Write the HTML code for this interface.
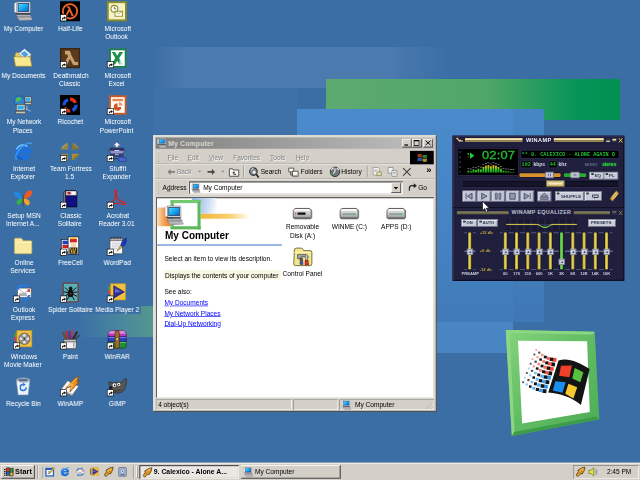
<!DOCTYPE html>
<html><head><meta charset="utf-8"><title>Desktop</title>
<style>
html,body{margin:0;padding:0;width:640px;height:480px;overflow:hidden;background:#3a6ea5}
body{font-family:"Liberation Sans",sans-serif;font-size:10.5px;color:#000;position:relative}
#wp{position:absolute;left:0;top:0;width:640px;height:480px}
#s{position:absolute;left:0;top:0;width:1024px;height:768px;transform:scale(.625);transform-origin:0 0;filter:blur(.55px)}
.a{position:absolute;white-space:nowrap}
svg{position:absolute;overflow:visible}
/* desktop icons */
.di{position:absolute;width:75px;height:75px}
.di svg{left:21px;top:0;width:32px;height:32px}
.di span{position:absolute;left:-10px;width:95px;top:37px;text-align:center;color:#fff;line-height:13px}
.di i{font-style:normal;background:#3a6ea5;padding:0 2px 1px}
/* taskbar */
#tb{position:absolute;left:0;top:740px;width:1024px;height:28px;background:#d4d0c8;box-shadow:inset 0 1px 0 #d4d0c8,inset 0 2px 0 #fff}
.btn{position:absolute;background:#d4d0c8;box-shadow:inset -1px -1px 0 #404040,inset 1px 1px 0 #fff,inset -2px -2px 0 #808080}
.sunk{position:absolute;box-shadow:inset 1px 1px 0 #808080,inset -1px -1px 0 #fff}
.grip{position:absolute;width:3px;box-shadow:inset 1px 1px 0 #fff,inset -1px -1px 0 #808080}
.etch{position:absolute;height:2px;border-top:1px solid #808080;border-bottom:1px solid #fff;box-sizing:border-box}
.vsep{position:absolute;width:2px;border-left:1px solid #808080;border-right:1px solid #fff;box-sizing:border-box}
/* window */
#win{position:absolute;left:245px;top:216px;width:454px;height:443px;background:#d4d0c8;box-shadow:inset -1px -1px 0 #404040,inset 1px 1px 0 #d4d0c8,inset -2px -2px 0 #808080,inset 2px 2px 0 #fff}
#ttl{position:absolute;left:4px;top:4px;width:446px;height:18px;background:linear-gradient(90deg,#808080,#c0c0c0)}
.dis{color:#808080;text-shadow:1px 1px 0 #fff}
.cb{position:absolute;top:2px;width:16px;height:14px;background:#d4d0c8;box-shadow:inset -1px -1px 0 #404040,inset 1px 1px 0 #fff,inset -2px -2px 0 #808080}
.lnk{color:#00f;text-decoration:underline}
.fl{position:absolute;width:90px;text-align:center;line-height:13px}
</style></head><body>
<svg width="0" height="0" style="position:absolute">
<defs>
<linearGradient id="scr" x1="0" y1="0" x2="1" y2="1"><stop offset="0" stop-color="#58e0ff"/><stop offset=".5" stop-color="#18a8f0"/><stop offset="1" stop-color="#0860c8"/></linearGradient>
<symbol id="mycomp" viewBox="0 0 32 32">
<path d="M2 3l4-2v18l-4-2z" fill="#f4f4f4" stroke="#9090a0" stroke-width=".6"/>
<path d="M6 1h20q1.500 0 1.500 1.500V18q0 1-1.500 1H6z" fill="#e2e2ea" stroke="#707080" stroke-width=".8"/>
<rect x="8" y="3.500" width="17" height="13" fill="url(#scr)" stroke="#283858" stroke-width="1.200"/>
<path d="M3 18.500l3 .5h21.500l-.5 2.500H7z" fill="#303030"/>
<path d="M5 21.500h22l3 3.500H7z" fill="#b8b8c0" stroke="#606068" stroke-width=".6"/>
<path d="M6 25.500l22-.5 3.500 5L11 31z" fill="#e4e4e8" stroke="#50505a" stroke-width=".8"/>
<path d="M9 27l19-.6M10.500 29l19-.6" stroke="#70707c" stroke-width=".9"/>
</symbol>
<linearGradient id="drg" x1="0" y1="0" x2="0" y2="1"><stop offset="0" stop-color="#f0f0f0"/><stop offset=".5" stop-color="#c8c8c8"/><stop offset="1" stop-color="#909090"/></linearGradient>
<symbol id="drv" viewBox="0 0 32 32"><path d="M4 8.500h23l4 3.500v11l-2 2H3l-2-2V12z" fill="url(#drg)" stroke="#383838" stroke-width="1.300"/><path d="M4.500 9.500h22l3 2.500H2z" fill="#fafafa"/><path d="M27 9l4 3v11l-2 2V12z" fill="#808080"/><path d="M2 23.500h27" stroke="#686868" stroke-width="1.500"/></symbol>
</defs></svg>
<svg id="wp" viewBox="0 0 640 480">
<defs>
<linearGradient id="gg" x1="0" x2="1"><stop offset="0" stop-color="#5daa70"/><stop offset=".55" stop-color="#50a668"/><stop offset=".85" stop-color="#089458"/><stop offset="1" stop-color="#009050"/></linearGradient>
<linearGradient id="gb" x1="0" y1="0" x2="0" y2="1"><stop offset="0" stop-color="#4b8bcb"/><stop offset=".5" stop-color="#4684c4"/><stop offset="1" stop-color="#417bb8"/></linearGradient>
<linearGradient id="gl" x1="0" x2="1"><stop offset="0" stop-color="#3a6ea5"/><stop offset=".12" stop-color="#4a7aae"/><stop offset=".8" stop-color="#4a7aae"/><stop offset="1" stop-color="#3a6ea5"/></linearGradient>
<linearGradient id="gn" x1="0" x2="1"><stop offset="0" stop-color="#3a6ea5"/><stop offset=".5" stop-color="#4684a0"/><stop offset="1" stop-color="#56988c"/></linearGradient>
</defs>
<rect width="640" height="480" fill="#3a6ea5"/>
<rect x="153" y="88" width="144" height="48" fill="#3d71a8"/><rect x="150" y="47" width="300" height="41" fill="url(#gl)"/>
<rect x="75" y="306" width="80" height="31" fill="url(#gn)"/>
<rect x="326" y="79" width="294" height="41" fill="url(#gg)"/>
<rect x="297" y="109" width="247" height="213" fill="url(#gb)"/>
<rect x="513" y="109" width="31" height="213" fill="#3a6ea5" opacity=".18"/><rect x="297" y="322" width="216" height="31" fill="#4985c3"/>
<!-- ME logo -->
<defs><linearGradient id="lg" x1="0" y1="0" x2="1" y2="1"><stop offset="0" stop-color="#84d47c"/><stop offset=".5" stop-color="#60bc62"/><stop offset="1" stop-color="#4cac54"/></linearGradient></defs>
<polygon points="505.8,329.9 594.7,331.8 599.3,419.3 511.8,436.1" fill="url(#lg)"/>
<polygon points="505.8,329.9 594.7,331.8 592,334.500 509.500,333" fill="#8cd880"/>
<polygon points="505.8,329.9 509.500,333 514.500,432 511.8,436.1" fill="#8cd880"/>
<polygon points="599.3,419.3 511.8,436.1 514.500,432 596,416.500" fill="#3c9c48"/>
<polygon points="518,340.7 587.1,341.3 589.8,412 522.1,423.4" fill="#fff"/>
<path d="M558.5,360.4 C567.5,357.3 578.4,361.6 589.6,369.0 L580.9,405.0 C572.2,397.2 559.7,393.1 548.2,392.4 Z" fill="#141414"/>
<polygon points="561.0,365.7 571.9,365.4 569.4,377.2 559.1,375.7" fill="#f0402a"/>
<polygon points="574.7,367.9 583.4,372.2 580.3,382.2 572.2,378.5" fill="#58c040"/>
<polygon points="555.3,381.3 565.6,382.2 562.5,392.8 552.8,390.6" fill="#1890f0"/>
<polygon points="568.4,383.8 577.2,387.2 573.4,398.4 565.3,393.8" fill="#f8c830"/>
<polygon points="552.8,357.8 556.7,358.3 556.2,362.0 552.3,361.5" fill="#f04830"/>
<polygon points="551.3,362.3 555.2,362.7 554.8,366.5 550.9,366.0" fill="#141414"/>
<polygon points="549.9,366.7 553.8,367.2 553.4,370.9 549.5,370.4" fill="#f04830"/>
<polygon points="548.5,371.2 552.4,371.6 551.9,375.4 548.0,374.9" fill="#141414"/>
<polygon points="547.1,375.6 551.0,376.1 550.5,379.8 546.6,379.3" fill="#2896f0"/>
<polygon points="545.6,380.1 549.5,380.6 549.1,384.3 545.2,383.8" fill="#141414"/>
<polygon points="544.2,384.5 548.1,385.0 547.6,388.8 543.8,388.2" fill="#2896f0"/>
<polygon points="542.8,389.0 546.7,389.5 546.2,393.2 542.3,392.7" fill="#141414"/>
<polygon points="549.9,357.4 553.4,357.8 553.0,361.3 549.4,360.8" fill="#141414"/>
<polygon points="548.4,361.9 551.9,362.3 551.5,365.7 547.9,365.2" fill="#f15842"/>
<polygon points="546.9,366.3 550.4,366.7 550.0,370.1 546.4,369.7" fill="#141414"/>
<polygon points="545.4,370.7 548.9,371.2 548.5,374.6 544.9,374.1" fill="#f15842"/>
<polygon points="543.9,375.2 547.4,375.6 547.0,379.0 543.4,378.6" fill="#141414"/>
<polygon points="542.4,379.6 545.9,380.0 545.5,383.5 541.9,383.0" fill="#3b9ff1"/>
<polygon points="540.9,384.1 544.4,384.5 544.0,387.9 540.4,387.4" fill="#141414"/>
<polygon points="539.4,388.5 542.9,388.9 542.5,392.3 538.9,391.9" fill="#3b9ff1"/>
<polygon points="547.0,356.7 550.2,357.1 549.8,360.2 546.6,359.8" fill="#f26955"/>
<polygon points="545.4,361.2 548.6,361.5 548.2,364.6 545.0,364.2" fill="#141414"/>
<polygon points="543.8,365.6 547.1,366.0 546.7,369.1 543.4,368.7" fill="#f26955"/>
<polygon points="542.3,370.0 545.5,370.4 545.1,373.5 541.9,373.1" fill="#141414"/>
<polygon points="540.7,374.5 543.9,374.9 543.5,377.9 540.3,377.5" fill="#4fa9f2"/>
<polygon points="539.1,378.9 542.3,379.3 541.9,382.4 538.7,382.0" fill="#141414"/>
<polygon points="537.5,383.3 540.8,383.7 540.4,386.8 537.1,386.4" fill="#4fa9f2"/>
<polygon points="536.0,387.8 539.2,388.2 538.8,391.3 535.6,390.8" fill="#141414"/>
<polygon points="544.1,355.5 547.0,355.9 546.6,358.6 543.7,358.3" fill="#141414"/>
<polygon points="542.4,360.0 545.3,360.3 545.0,363.1 542.1,362.7" fill="#f47a68"/>
<polygon points="540.8,364.4 543.7,364.8 543.3,367.5 540.4,367.2" fill="#141414"/>
<polygon points="539.1,368.9 542.0,369.2 541.7,372.0 538.8,371.6" fill="#f47a68"/>
<polygon points="537.5,373.3 540.4,373.7 540.0,376.4 537.1,376.1" fill="#141414"/>
<polygon points="535.8,377.8 538.7,378.1 538.4,380.9 535.5,380.5" fill="#63b2f4"/>
<polygon points="534.2,382.2 537.1,382.6 536.7,385.4 533.8,385.0" fill="#141414"/>
<polygon points="532.5,386.7 535.4,387.0 535.1,389.8 532.2,389.4" fill="#63b2f4"/>
<polygon points="541.2,353.7 543.7,354.0 543.4,356.5 540.9,356.1" fill="#f58b7b"/>
<polygon points="539.5,358.2 542.0,358.5 541.7,361.0 539.2,360.6" fill="#141414"/>
<polygon points="537.7,362.7 540.3,363.0 540.0,365.5 537.4,365.1" fill="#f58b7b"/>
<polygon points="536.0,367.2 538.6,367.5 538.3,370.0 535.7,369.6" fill="#141414"/>
<polygon points="534.3,371.7 536.8,372.0 536.5,374.5 534.0,374.1" fill="#76bcf5"/>
<polygon points="532.6,376.2 535.1,376.5 534.8,379.0 532.3,378.6" fill="#141414"/>
<polygon points="530.8,380.7 533.4,381.0 533.1,383.5 530.5,383.1" fill="#76bcf5"/>
<polygon points="529.1,385.2 531.7,385.5 531.4,388.0 528.8,387.6" fill="#141414"/>
<polygon points="538.3,351.4 540.5,351.7 540.2,353.8 538.0,353.5" fill="#505050"/>
<polygon points="536.5,356.0 538.7,356.3 538.4,358.4 536.2,358.1" fill="#f69b8e"/>
<polygon points="534.7,360.6 536.9,360.8 536.6,362.9 534.4,362.7" fill="#505050"/>
<polygon points="532.9,365.1 535.1,365.4 534.8,367.5 532.6,367.2" fill="#f69b8e"/>
<polygon points="531.1,369.7 533.3,369.9 533.0,372.1 530.8,371.8" fill="#505050"/>
<polygon points="529.3,374.2 531.5,374.5 531.2,376.6 529.0,376.3" fill="#8ac6f6"/>
<polygon points="527.5,378.8 529.7,379.1 529.4,381.2 527.2,380.9" fill="#505050"/>
<polygon points="525.7,383.3 527.9,383.6 527.7,385.7 525.4,385.4" fill="#8ac6f6"/>
<polygon points="535.4,348.8 537.3,349.1 537.0,350.9 535.2,350.6" fill="#f8aca1"/>
<polygon points="533.5,353.5 535.4,353.7 535.2,355.5 533.3,355.3" fill="#505050"/>
<polygon points="531.6,358.1 533.5,358.3 533.3,360.1 531.4,359.9" fill="#f8aca1"/>
<polygon points="529.8,362.7 531.6,363.0 531.4,364.8 529.5,364.5" fill="#505050"/>
<polygon points="527.9,367.4 529.8,367.6 529.5,369.4 527.7,369.2" fill="#9ecff8"/>
<polygon points="526.0,372.0 527.9,372.2 527.7,374.0 525.8,373.8" fill="#505050"/>
<polygon points="524.2,376.6 526.0,376.9 525.8,378.7 523.9,378.4" fill="#9ecff8"/>
<polygon points="522.3,381.3 524.2,381.5 523.9,383.3 522.1,383.1" fill="#505050"/>
</svg>
<div id="s">
<!-- desktop icons -->
<div class="di" style="left:0px;top:2px"><svg viewBox="0 0 32 32"><use href="#mycomp"/></svg><span><i>My Computer</i></span></div>
<div class="di" style="left:75px;top:2px"><svg viewBox="0 0 32 32"><rect width="32" height="32" fill="#000"/><circle cx="16" cy="16" r="11.500" fill="none" stroke="#f0622a" stroke-width="3"/><path d="M11 8h4l7 15.500h-3.500l-3.200-7.500-4 7.500H8l5.700-11-1-2.500H11z" fill="#f0622a"/><g transform="translate(0,21)"><rect x=".5" y=".5" width="10" height="10" fill="#fff" stroke="#000" stroke-width="1"/><path d="M3 8.500c0-3 2-4 4-4V3l2.500 2.500L7 8V6.500c-1.500 0-2.500.5-3 2z" fill="#000"/></g></svg><span><i>Half-Life</i></span></div>
<div class="di" style="left:150px;top:2px"><svg viewBox="0 0 32 32"><rect x="1.500" y="1.500" width="29" height="29" fill="#f4f0c8" stroke="#8c8c24" stroke-width="3"/><circle cx="12" cy="12" r="5.500" fill="#fff" stroke="#909028" stroke-width="1.800"/><path d="M12 8.500V12h3" stroke="#606018" stroke-width="1.300" fill="none"/><rect x="13" y="16" width="12" height="8" fill="#fffff0" stroke="#909028" stroke-width="1.500"/><path d="M13 16l6 4 6-4" stroke="#909028" stroke-width="1" fill="none"/></svg><span><i>Microsoft<br>Outlook</i></span></div>
<div class="di" style="left:0px;top:77px"><svg viewBox="0 0 32 32"><path d="M3 10l2-3h8l2 3h13v18H3z" fill="#e8c860" stroke="#907830" stroke-width="1"/><path d="M9 9l9-8 11 9-9 8z" fill="#fff" stroke="#7090c0" stroke-width="1"/><path d="M12 9l6-5 7 6-6 5z" fill="#50a0e0"/><path d="M1 14h26l3 15H4z" fill="#f8e890" stroke="#a08830" stroke-width="1"/></svg><span><i>My Documents</i></span></div>
<div class="di" style="left:75px;top:77px"><svg viewBox="0 0 32 32"><rect width="32" height="32" fill="#5a3a1c"/><rect x="1" y="1" width="30" height="30" fill="none" stroke="#3a2410" stroke-width="2"/><path d="M8 5h7l9 17h5v5h-8l-5-10-5 10H5v-5h3l5-9-1.500-3H8z" fill="#c8a070"/><path d="M8 5h7l2 4" stroke="#f0d0a0" stroke-width="1" fill="none"/><g transform="translate(0,21)"><rect x=".5" y=".5" width="10" height="10" fill="#fff" stroke="#000" stroke-width="1"/><path d="M3 8.500c0-3 2-4 4-4V3l2.500 2.500L7 8V6.500c-1.500 0-2.500.5-3 2z" fill="#000"/></g></svg><span><i>Deathmatch<br>Classic</i></span></div>
<div class="di" style="left:150px;top:77px"><svg viewBox="0 0 32 32"><rect x="5" y="2" width="25" height="28" fill="#fff" stroke="#208048" stroke-width="3"/><path d="M8 6h5l3.500 6L20 6h6l-6.500 10L26 26h-6l-3.500-6L13 26H7l6.500-10z" fill="#189048"/><path d="M20 20h8v8h-8z" fill="#fff" opacity=".7"/><g transform="translate(0,21)"><rect x=".5" y=".5" width="10" height="10" fill="#fff" stroke="#000" stroke-width="1"/><path d="M3 8.500c0-3 2-4 4-4V3l2.500 2.500L7 8V6.500c-1.500 0-2.500.5-3 2z" fill="#000"/></g></svg><span><i>Microsoft<br>Excel</i></span></div>
<div class="di" style="left:0px;top:152px"><svg viewBox="0 0 32 32"><circle cx="10" cy="10" r="8.500" fill="#3080d0" stroke="#205090" stroke-width="1"/><path d="M4 6q4-4 8-2 2 3-1 5-3 0-4 3-3-1-3-6zM10 14q4-1 6 2-2 3-5 2z" fill="#50c050"/><rect x="19" y="3" width="10" height="8" fill="#d8d4c8" stroke="#404040" stroke-width="1"/><rect x="20.500" y="4.500" width="7" height="5" fill="#30b0f0"/><rect x="19" y="12" width="10" height="3" fill="#c8c4b8" stroke="#404040" stroke-width=".8"/><rect x="5" y="15" width="14" height="10" fill="#d8d4c8" stroke="#404040" stroke-width="1"/><rect x="7" y="17" width="10" height="6" fill="#30b0f0"/><rect x="4" y="26" width="16" height="4" fill="#c8c4b8" stroke="#404040" stroke-width=".8"/><path d="M22 17v6M20 22l8 4" stroke="#a0c0e0" stroke-width="1.500"/></svg><span><i>My Network<br>Places</i></span></div>
<div class="di" style="left:75px;top:152px"><svg viewBox="0 0 32 32"><rect width="32" height="32" fill="#000"/><path d="M16 4a12 12 0 0 1 11 8l-5 1a7 7 0 0 0-6-4z" fill="#e83020"/><path d="M28 15a12 12 0 0 1-7 12l-2-5a7 7 0 0 0 4-6z" fill="#2050e0"/><path d="M17 28a12 12 0 0 1-12-7l5-2a7 7 0 0 0 6 4z" fill="#e83020"/><path d="M4 17a12 12 0 0 1 8-12l2 5a7 7 0 0 0-5 6z" fill="#2050e0"/><g transform="translate(0,21)"><rect x=".5" y=".5" width="10" height="10" fill="#fff" stroke="#000" stroke-width="1"/><path d="M3 8.500c0-3 2-4 4-4V3l2.500 2.500L7 8V6.500c-1.500 0-2.500.5-3 2z" fill="#000"/></g></svg><span><i>Ricochet</i></span></div>
<div class="di" style="left:150px;top:152px"><svg viewBox="0 0 32 32"><rect x="5" y="2" width="25" height="28" fill="#fff" stroke="#d05820" stroke-width="3"/><rect x="9" y="6" width="17" height="4" fill="#e88850"/><path d="M17 13a6 6 0 1 0 6 6h-6z" fill="#d05820"/><path d="M19 11v6h6a6 6 0 0 0-6-6z" fill="#f0a070"/><g transform="translate(0,21)"><rect x=".5" y=".5" width="10" height="10" fill="#fff" stroke="#000" stroke-width="1"/><path d="M3 8.500c0-3 2-4 4-4V3l2.500 2.500L7 8V6.500c-1.500 0-2.500.5-3 2z" fill="#000"/></g></svg><span><i>Microsoft<br>PowerPoint</i></span></div>
<div class="di" style="left:0px;top:227px"><svg viewBox="0 0 32 32"><path d="M16 3.500a13 13 0 0 1 13 14.500H11.500a5 5 0 0 0 9.500 1.500H28.500A13 13 0 1 1 16 3.500zm0 6a5 5 0 0 0-4.600 3.500h9.200A5 5 0 0 0 16 9.500z" fill="#1c70e0"/><path d="M5.500 12a11.500 11.500 0 0 1 10.500-7 12 12 0 0 1 7 2.500" stroke="#78c8ff" stroke-width="2.200" fill="none"/><path d="M30 3c-5-3.500-17 3-23 13.500-3 5.500-4 10.500-1 12" stroke="#3c98f4" stroke-width="2.400" fill="none"/><path d="M6 22a11 11 0 0 0 9 6" stroke="#0c48a8" stroke-width="1.500" fill="none"/></svg><span><i>Internet<br>Explorer</i></span></div>
<div class="di" style="left:75px;top:227px"><svg viewBox="0 0 32 32"><path d="M2 12V9l8-7h3v10z" fill="#94844c"/><path d="M3 9l8-6" stroke="#c8b878" stroke-width="1.200"/><path d="M19 2h3l8 7v3H19z" fill="#84743c"/><path d="M22 3l7 6" stroke="#b8a868" stroke-width="1.200"/><path d="M19 19h11v3l-8 7h-3z" fill="#a89034"/><path d="M20 28l9-7" stroke="#5c4c18" stroke-width="1"/><path d="M13 19v10h-3l-8-7v-3z" fill="#94844c"/><g transform="translate(0,21)"><rect x=".5" y=".5" width="10" height="10" fill="#fff" stroke="#000" stroke-width="1"/><path d="M3 8.500c0-3 2-4 4-4V3l2.500 2.500L7 8V6.500c-1.500 0-2.500.5-3 2z" fill="#000"/></g></svg><span><i>Team Fortress<br>1.5</i></span></div>
<div class="di" style="left:150px;top:227px"><svg viewBox="0 0 32 32"><path d="M16 0l6 6h-4v3h-4V6h-4z" fill="#f0f0fc" stroke="#505088" stroke-width=".8"/><path d="M5 10h22v3H5z" fill="#383868" stroke="#202040" stroke-width=".8"/><path d="M3 14h26l-4 5H7z" fill="#9898d0" stroke="#303060" stroke-width="1"/><path d="M6 20h20v3H6z" fill="#484880" stroke="#202040" stroke-width=".8"/><path d="M12 13h8v1.500h-8zM13 19h6v1.500h-6z" fill="#c8c8f0"/><path d="M19 24h4l1 1.500h7V31H19z" fill="#4868d0" stroke="#182878" stroke-width=".8"/><path d="M11 27h6" stroke="#303060" stroke-width="1.800"/><g transform="translate(0,21)"><rect x=".5" y=".5" width="10" height="10" fill="#fff" stroke="#000" stroke-width="1"/><path d="M3 8.500c0-3 2-4 4-4V3l2.500 2.500L7 8V6.500c-1.500 0-2.500.5-3 2z" fill="#000"/></g></svg><span><i>StuffIt<br>Expander</i></span></div>
<div class="di" style="left:0px;top:302px"><svg viewBox="0 0 32 32"><path d="M15 16C10 4 4 3 2 5c-2 3 2 12 13 11z" fill="#2088e0"/><path d="M15 16C8 15 4 20 6 24c3 4 9 0 9-8z" fill="#38b048"/><path d="M17 16C19 3 27 1 30 4c2 4-3 12-13 12z" fill="#f05820"/><path d="M17 16c8-1 11 5 9 9-3 4-9 0-9-9z" fill="#f8a020"/><path d="M16 10v17" stroke="#604020" stroke-width="1.500"/></svg><span><i>Setup MSN<br>Internet A...</i></span></div>
<div class="di" style="left:75px;top:302px"><svg viewBox="0 0 32 32"><path d="M9 3h16l2 2v24H9z" fill="#101088" stroke="#000" stroke-width="1"/><path d="M9 3h16l2 2v6H9z" fill="#d8d8e8" stroke="#000" stroke-width="1"/><path d="M12 5h5v4h-5z" fill="#c02020"/><path d="M6 6l3-3v26l-3-2z" fill="#808098" stroke="#000" stroke-width=".8"/><path d="M19 5h5v4h-5z" fill="#fff"/><g transform="translate(0,21)"><rect x=".5" y=".5" width="10" height="10" fill="#fff" stroke="#000" stroke-width="1"/><path d="M3 8.500c0-3 2-4 4-4V3l2.500 2.500L7 8V6.500c-1.500 0-2.500.5-3 2z" fill="#000"/></g></svg><span><i>Classic<br>Solitaire</i></span></div>
<div class="di" style="left:150px;top:302px"><svg viewBox="0 0 32 32"><path d="M13 2c3 0 3 5 2 10 2 5 6 8 11 9 4 1 5 3 3 4s-6-1-10-2c-5 0-10 2-14 4-2 1-4 0-3-2 2-3 7-5 11-8 1-4 1-8 0-11-1-3-1-4 0-4z" fill="none" stroke="#d82020" stroke-width="1.900"/><g transform="translate(0,21)"><rect x=".5" y=".5" width="10" height="10" fill="#fff" stroke="#000" stroke-width="1"/><path d="M3 8.500c0-3 2-4 4-4V3l2.500 2.500L7 8V6.500c-1.500 0-2.500.5-3 2z" fill="#000"/></g></svg><span><i>Acrobat<br>Reader 3.01</i></span></div>
<div class="di" style="left:0px;top:377px"><svg viewBox="0 0 32 32"><path d="M2 6q0-2 2-2h8q2 0 3 2l1 2h12q2 0 2 2v17q0 2-2 2H4q-2 0-2-2z" fill="#f8e8a0" stroke="#c0a858" stroke-width="1"/><path d="M3 11h26" stroke="#fff8c8" stroke-width="1.500"/></svg><span><i>Online<br>Services</i></span></div>
<div class="di" style="left:75px;top:377px"><svg viewBox="0 0 32 32"><rect x="2" y="6" width="13" height="20" fill="#fff" stroke="#000" stroke-width="1"/><rect x="4" y="8" width="9" height="6" fill="#2040c0"/><rect x="4" y="15" width="9" height="5" fill="#d02020"/><rect x="13" y="2" width="17" height="28" fill="#fff" stroke="#000" stroke-width="1"/><path d="M16 5h11v6H16z" fill="#d02020"/><path d="M17 11h9v8h-9z" fill="#f8d8b0"/><path d="M15 19h13v10H15z" fill="#202020"/><path d="M17 20l2 8M21 20v8M25 20l-2 8" stroke="#f0c020" stroke-width="1.500"/><path d="M16 3h11l-1 3-2-2-2.500 2-2.500-2-2 2z" fill="#f0c020"/><g transform="translate(0,21)"><rect x=".5" y=".5" width="10" height="10" fill="#fff" stroke="#000" stroke-width="1"/><path d="M3 8.500c0-3 2-4 4-4V3l2.500 2.500L7 8V6.500c-1.500 0-2.500.5-3 2z" fill="#000"/></g></svg><span><i>FreeCell</i></span></div>
<div class="di" style="left:150px;top:377px"><svg viewBox="0 0 32 32"><path d="M5 4h20v25H5z" fill="#f8f8f8" stroke="#404040" stroke-width="1"/><path d="M5 4h20v4H5z" fill="#c8c8c8" stroke="#404040" stroke-width="1"/><path d="M7 2v4M10 2v4M13 2v4M16 2v4M19 2v4M22 2v4" stroke="#303030" stroke-width="1.200"/><path d="M8 12h14M8 15h14M8 18h14M8 21h10" stroke="#b0b0c0" stroke-width="1"/><path d="M31 4c-4 1-8 6-9 12l3 2c5-3 7-9 6-14z" fill="#1838c0" stroke="#081868" stroke-width=".8"/><path d="M22 16l-6 9 9-7z" fill="#e0c040" stroke="#605010" stroke-width=".8"/><g transform="translate(0,21)"><rect x=".5" y=".5" width="10" height="10" fill="#fff" stroke="#000" stroke-width="1"/><path d="M3 8.500c0-3 2-4 4-4V3l2.500 2.500L7 8V6.500c-1.500 0-2.500.5-3 2z" fill="#000"/></g></svg><span><i>WordPad</i></span></div>
<div class="di" style="left:0px;top:452px"><svg viewBox="0 0 32 32"><path d="M7 9h22v15H7z" fill="#fff" stroke="#505050" stroke-width="1"/><path d="M7 9l11 8 11-8" stroke="#808080" stroke-width="1" fill="none"/><rect x="23" y="11" width="4" height="4" fill="#d04040"/><path d="M10 17h12v5H10z" fill="#b0b0b0"/><path d="M4 12C6 4 14 1 21 5l-2-4 7 4-7 4 1-2c-5-2-10 0-12 5z" fill="#2878e0"/><path d="M28 20c-2 8-10 11-17 7l2 4-7-4 7-4-1 2c5 2 10 0 12-5z" fill="#2878e0"/><g transform="translate(0,21)"><rect x=".5" y=".5" width="10" height="10" fill="#fff" stroke="#000" stroke-width="1"/><path d="M3 8.500c0-3 2-4 4-4V3l2.500 2.500L7 8V6.500c-1.500 0-2.500.5-3 2z" fill="#000"/></g></svg><span><i>Outlook<br>Express</i></span></div>
<div class="di" style="left:75px;top:452px"><svg viewBox="0 0 32 32"><rect x="5" y="1" width="24" height="30" rx="2" fill="#58b0b8" stroke="#704038" stroke-width="2.200"/><ellipse cx="17" cy="17.500" rx="4.500" ry="6" fill="#101010"/><circle cx="17" cy="9.500" r="3" fill="#101010"/><path d="M14 14L8 8M13 16l-7-1M13 19l-6 3M15 21l-4 7M20 14l6-6M21 16l7-1M21 19l6 3M19 21l4 7" stroke="#101010" stroke-width="1.600"/><circle cx="17" cy="18" r="1.500" fill="#a03030"/><g transform="translate(0,21)"><rect x=".5" y=".5" width="10" height="10" fill="#fff" stroke="#000" stroke-width="1"/><path d="M3 8.500c0-3 2-4 4-4V3l2.500 2.500L7 8V6.500c-1.500 0-2.500.5-3 2z" fill="#000"/></g></svg><span><i>Spider Solitaire</i></span></div>
<div class="di" style="left:150px;top:452px"><svg viewBox="0 0 32 32"><rect x="2" y="6" width="5" height="18" fill="#e04030"/><rect x="2" y="6" width="5" height="6" fill="#40a040"/><rect x="2" y="18" width="5" height="6" fill="#3060d0"/><rect x="6" y="2" width="24" height="26" fill="#f0c040" stroke="#c09020" stroke-width="1"/><path d="M11 5l17 10-17 10z" fill="#303098" stroke="#181860" stroke-width="1"/><path d="M13 9l10 6-10 1z" fill="#6868c8"/><g transform="translate(0,21)"><rect x=".5" y=".5" width="10" height="10" fill="#fff" stroke="#000" stroke-width="1"/><path d="M3 8.500c0-3 2-4 4-4V3l2.500 2.500L7 8V6.500c-1.500 0-2.500.5-3 2z" fill="#000"/></g></svg><span><i>Media Player 2</i></span></div>
<div class="di" style="left:0px;top:527px"><svg viewBox="0 0 32 32"><rect x="2" y="6" width="5" height="18" fill="#e04030"/><rect x="2" y="6" width="5" height="6" fill="#40a040"/><rect x="2" y="18" width="5" height="6" fill="#3060d0"/><rect x="6" y="2" width="24" height="26" fill="#f0c040" stroke="#c09020" stroke-width="1"/><circle cx="18" cy="15" r="9" fill="#909090" stroke="#404040" stroke-width="1"/><circle cx="18" cy="9.500" r="2.500" fill="#e0e0e0"/><circle cx="18" cy="20.500" r="2.500" fill="#e0e0e0"/><circle cx="12.500" cy="15" r="2.500" fill="#e0e0e0"/><circle cx="23.500" cy="15" r="2.500" fill="#e0e0e0"/><circle cx="18" cy="15" r="1.500" fill="#303030"/><g transform="translate(0,21)"><rect x=".5" y=".5" width="10" height="10" fill="#fff" stroke="#000" stroke-width="1"/><path d="M3 8.500c0-3 2-4 4-4V3l2.500 2.500L7 8V6.500c-1.500 0-2.500.5-3 2z" fill="#000"/></g></svg><span><i>Windows<br>Movie Maker</i></span></div>
<div class="di" style="left:75px;top:527px"><svg viewBox="0 0 32 32"><path d="M8 1l3 1 5 14h-4z" fill="#c02828"/><path d="M18 0h3l-1 16h-4z" fill="#d03030"/><path d="M13 3l3-1 3 14h-4z" fill="#2840c0"/><path d="M26 3l3 1-7 13h-4z" fill="#282828"/><path d="M31 8l1 2-9 8h-3z" fill="#404040"/><path d="M3 5l3-1 7 13H9z" fill="#704828"/><path d="M6 16h20v12q0 3-3 3H9q-3 0-3-3z" fill="#f4f4f4" stroke="#383838" stroke-width="1.200"/><path d="M6 16h20v4H6z" fill="#c0c0c4" stroke="#383838" stroke-width="1"/><path d="M22 21v8" stroke="#a8a8b0" stroke-width="2.500"/><g transform="translate(0,21)"><rect x=".5" y=".5" width="10" height="10" fill="#fff" stroke="#000" stroke-width="1"/><path d="M3 8.500c0-3 2-4 4-4V3l2.500 2.500L7 8V6.500c-1.500 0-2.500.5-3 2z" fill="#000"/></g></svg><span><i>Paint</i></span></div>
<div class="di" style="left:150px;top:527px"><svg viewBox="0 0 32 32"><path d="M2 7l4-5h21l4 5v5H2z" fill="#b838b8" stroke="#401040" stroke-width="1"/><path d="M6 2h21l4 5H2z" fill="#e088e0"/><path d="M2 12h29v8H2z" fill="#2c40c0" stroke="#101850" stroke-width="1"/><path d="M2 13h29" stroke="#7080e8" stroke-width="1.500"/><path d="M2 20h29v8l-2 2H4l-2-2z" fill="#209038" stroke="#083810" stroke-width="1"/><path d="M2 21h29" stroke="#60c070" stroke-width="1.500"/><path d="M14 2h5l1 5v23h-7V7z" fill="#9c6c30" stroke="#402408" stroke-width="1"/><rect x="14.500" y="13" width="4" height="5" fill="#e8d060" stroke="#503010" stroke-width=".8"/><g transform="translate(0,21)"><rect x=".5" y=".5" width="10" height="10" fill="#fff" stroke="#000" stroke-width="1"/><path d="M3 8.500c0-3 2-4 4-4V3l2.500 2.500L7 8V6.500c-1.500 0-2.500.5-3 2z" fill="#000"/></g></svg><span><i>WinRAR</i></span></div>
<div class="di" style="left:0px;top:602px"><svg viewBox="0 0 32 32"><path d="M5 6h22l-3 24H8z" fill="#e8f0f8" stroke="#8090a8" stroke-width="1"/><ellipse cx="16" cy="6" rx="11" ry="3.500" fill="#b0c0d0" stroke="#8090a8" stroke-width="1"/><ellipse cx="16" cy="6" rx="8" ry="2" fill="#607088"/><path d="M16 12a6 6 0 1 0 6 6h-2.500a3.500 3.500 0 1 1-3.500-3.500z" fill="#2878d8"/><path d="M16 10l4 3.500-4 3z" fill="#2878d8"/><path d="M8 8l2 20" stroke="#fff" stroke-width="2"/></svg><span><i>Recycle Bin</i></span></div>
<div class="di" style="left:75px;top:602px"><svg viewBox="0 0 32 32"><path d="M12 7l18 9-11 15L1 22z" fill="#f4f4f4" stroke="#606060" stroke-width="1"/><path d="M4 22l15 7" stroke="#a0a0a0" stroke-width="1.500"/><path d="M30 0l-3 9 4-1-15 17 2-9-9 4L23 4z" fill="#f08c18" stroke="#8c4c08" stroke-width="1.200"/><path d="M27 3L13 16l7-3-2 8" stroke="#f8c868" stroke-width="1.600" fill="none"/><g transform="translate(0,21)"><rect x=".5" y=".5" width="10" height="10" fill="#fff" stroke="#000" stroke-width="1"/><path d="M3 8.500c0-3 2-4 4-4V3l2.500 2.500L7 8V6.500c-1.500 0-2.500.5-3 2z" fill="#000"/></g></svg><span><i>WinAMP</i></span></div>
<div class="di" style="left:150px;top:602px"><svg viewBox="0 0 32 32"><path d="M31 4c-3 0-6 3-9 7-4-2-9-2-12 0L5 9c-2 0-3 2-2 4l3 3c-1 5 3 10 10 11 8 0 12-4 13-9 2-4 3-10 2-14z" fill="#585450" stroke="#282420" stroke-width="1"/><circle cx="12" cy="14" r="3" fill="#fff"/><circle cx="12.500" cy="14.500" r="1.300" fill="#000"/><circle cx="19" cy="13" r="2.500" fill="#fff"/><circle cx="19" cy="13.500" r="1.100" fill="#000"/><ellipse cx="6" cy="18" rx="3" ry="2.200" fill="#181818"/><path d="M8 22q6 4 14 0" stroke="#282420" stroke-width="1" fill="none"/><g transform="translate(0,21)"><rect x=".5" y=".5" width="10" height="10" fill="#fff" stroke="#000" stroke-width="1"/><path d="M3 8.500c0-3 2-4 4-4V3l2.500 2.500L7 8V6.500c-1.500 0-2.500.5-3 2z" fill="#000"/></g></svg><span><i>GIMP</i></span></div>
<div id="win">
 <div id="ttl">
  <svg style="left:2px;top:1px;width:16px;height:16px"><use href="#mycomp"/></svg>
  <div class="a" style="left:20px;top:3px;font-weight:bold;color:#d8d4cc;font-size:11px;letter-spacing:.25px">My Computer</div>
  <div class="cb" style="left:394px"><div class="a" style="left:4px;top:9px;width:6px;height:2px;background:#000"></div></div>
  <div class="cb" style="left:410px"><div class="a" style="left:3px;top:2px;width:9px;height:9px;box-sizing:border-box;border:1px solid #000;border-top-width:2px"></div></div>
  <div class="cb" style="left:428px"><svg style="left:4px;top:3px;width:8px;height:7px" viewBox="0 0 8 7"><path d="M0 0l8 7M8 0l-8 7" stroke="#000" stroke-width="1.6"/></svg></div>
 </div>
 <!-- menu band -->
 <div class="grip" style="left:7px;top:26px;height:17px"></div>
 <div class="a dis" style="left:23px;top:30px"><u>F</u>ile</div>
 <div class="a dis" style="left:55px;top:30px"><u>E</u>dit</div>
 <div class="a dis" style="left:89px;top:30px"><u>V</u>iew</div>
 <div class="a dis" style="left:128px;top:30px">F<u>a</u>vorites</div>
 <div class="a dis" style="left:187px;top:30px"><u>T</u>ools</div>
 <div class="a dis" style="left:228px;top:30px"><u>H</u>elp</div>
 <div class="a" style="left:411px;top:25px;width:38px;height:22px;background:#000;z-index:2">
  <svg style="left:11px;top:3px;width:17px;height:16px" viewBox="0 0 17 16"><path d="M1 3q3-2 7 0v5q-4-2-7 0z" fill="#a03820"/><path d="M9 3q4 2 7 0v5q-3 2-7 0z" fill="#2c7a34"/><path d="M1 9q3-2 7 0v5q-4-2-7 0z" fill="#2458a8"/><path d="M9 9q4 2 7 0v5q-3 2-7 0z" fill="#a89028"/></svg>
 </div>
 <div class="etch" style="left:4px;top:45px;width:446px"></div>
 <!-- toolbar band -->
 <div class="grip" style="left:7px;top:49px;height:19px"></div>
 <svg style="left:21px;top:51px;width:16px;height:16px" viewBox="0 0 16 16"><path d="M2 8l5-5v3.500h7v3H7V13z" fill="#808080"/></svg>
 <div class="a dis" style="left:38px;top:53px">Back</div>
 <svg style="left:72px;top:57px;width:5px;height:3px" viewBox="0 0 5 3"><path d="M0 0h5l-2.500 3z" fill="#808080"/></svg>
 <svg style="left:85px;top:51px;width:16px;height:16px" viewBox="0 0 16 16"><path d="M14 8L9 3v3.500H2v3h7V13z" fill="#484848"/></svg>
 <svg style="left:109px;top:57px;width:5px;height:3px" viewBox="0 0 5 3"><path d="M0 0h5l-2.500 3z" fill="#808080"/></svg>
 <svg style="left:121px;top:51px;width:17px;height:16px" viewBox="0 0 17 16"><path d="M1 3h5l1 2h9v10H1z" fill="#f8f8f0" stroke="#383838" stroke-width="1.300"/><path d="M8 12V8M6 10l2-2 2 2M8 12h4" stroke="#202020" stroke-width="1.300" fill="none"/></svg>
 <div class="vsep" style="left:144px;top:49px;height:19px"></div>
 <svg style="left:153px;top:51px;width:17px;height:17px" viewBox="0 0 17 17"><circle cx="7.500" cy="7.500" r="6" fill="#8898a8" stroke="#282828" stroke-width="1.800"/><circle cx="8.500" cy="8.500" r="3.200" fill="#f4f4f4" stroke="#404040" stroke-width=".8"/><path d="M3 5a6 6 0 0 1 5-3" stroke="#e0e8f0" stroke-width="1.500" fill="none"/><path d="M12 12l4 5" stroke="#282828" stroke-width="2.600"/></svg>
 <div class="a" style="left:172px;top:53px">Search</div>
 <svg style="left:216px;top:51px;width:17px;height:16px" viewBox="0 0 17 16"><path d="M1 2h8v6H1z" fill="#fcfcf4" stroke="#303030" stroke-width="1.200"/><path d="M4 8v5h4" stroke="#303030" stroke-width="1.200" fill="none"/><path d="M7 7h9v8H7z" fill="#fcfcf4" stroke="#303030" stroke-width="1.200"/><path d="M8 13.500h7" stroke="#a0a090" stroke-width="1.500"/></svg>
 <div class="a" style="left:236px;top:53px">Folders</div>
 <svg style="left:282px;top:50px;width:18px;height:18px" viewBox="0 0 18 18"><circle cx="9" cy="9" r="7.500" fill="#70787c" stroke="#282828" stroke-width="1.400"/><path d="M9 3.500v5.500l-3.500 3" stroke="#fff" stroke-width="1.600" fill="none"/><path d="M3 6a7 7 0 0 1 5-3.500M12 3l3 3" stroke="#f0f0f0" stroke-width="1.800" fill="none"/><path d="M1 11l5 1-3 4z" fill="#30a040"/></svg>
 <div class="a" style="left:301px;top:53px">History</div>
 <div class="vsep" style="left:342px;top:49px;height:19px"></div>
 <svg style="left:351px;top:51px;width:16px;height:16px" viewBox="0 0 16 16"><path d="M1 1h8l2 2v10H1z" fill="#f4f4f4" stroke="#808080" stroke-width="1"/><path d="M7 8h7v6H7z" fill="#e8e0a0" stroke="#707050" stroke-width="1"/><path d="M3 5h5M3 7h3" stroke="#808080"/></svg>
 <svg style="left:375px;top:51px;width:16px;height:16px" viewBox="0 0 16 16"><path d="M1 1h8v9H1z" fill="#f4f4f4" stroke="#707070" stroke-width="1"/><path d="M7 6h8v9H7z" fill="#f4f4f4" stroke="#707070" stroke-width="1"/><path d="M9 9h4M9 11h4" stroke="#808080"/></svg>
 <svg style="left:399px;top:52px;width:14px;height:14px" viewBox="0 0 14 14"><path d="M1 1l12 12M13 1L1 13" stroke="#404040" stroke-width="1.800"/></svg>
 <div class="a" style="left:437px;top:46px;font-weight:bold;font-size:15px">»</div>
 <div class="etch" style="left:4px;top:69px;width:446px"></div>
 <!-- address band -->
 <div class="grip" style="left:7px;top:74px;height:20px"></div>
 <div class="a" style="left:15px;top:78px">A<u>d</u>dress</div>
 <div class="a" style="left:57px;top:74px;width:342px;height:21px;background:#fff;box-shadow:inset 1px 1px 0 #808080,inset -1px -1px 0 #fff,inset 2px 2px 0 #404040,inset -2px -2px 0 #d4d0c8"></div>
 <svg style="left:60px;top:77px;width:16px;height:16px"><use href="#mycomp"/></svg>
 <div class="a" style="left:80px;top:78px">My Computer</div>
 <div class="btn" style="left:381px;top:76px;width:16px;height:17px"><svg style="left:4px;top:7px;width:7px;height:4px" viewBox="0 0 7 4"><path d="M0 0h7l-3.500 4z"/></svg></div>
 <svg style="left:408px;top:76px;width:15px;height:15px" viewBox="0 0 15 15"><path d="M2 13V9a4 4 0 0 1 4-4h5" stroke="#202020" stroke-width="1.800" fill="none"/><path d="M9 1l5 4-5 4z" fill="#202020"/></svg>
 <div class="a" style="left:424px;top:78px">Go</div>
 <!-- content -->
 <div class="a" style="left:4px;top:99px;width:446px;height:322px;background:#fff;box-shadow:inset 1px 1px 0 #808080,inset -1px -1px 0 #fff,inset 2px 2px 0 #404040,inset -2px -2px 0 #d4d0c8"></div>
 <div class="a" style="left:6px;top:116px;width:23px;height:30px;background:linear-gradient(90deg,#fce0c0,#f4a050 50%,#f07c30)"></div>
 <div class="a" style="left:62px;top:101px;width:40px;height:25px;background:linear-gradient(100deg,#88b0e0,#c8dcf4 60%,#fff)"></div>
 <div class="a" style="left:75px;top:126px;width:80px;height:8px;background:linear-gradient(90deg,#f0b838,#f8d070 60%,#fff)"></div>
 <div class="a" style="left:28px;top:104px;width:48px;height:47px;box-sizing:border-box;border:5px solid #5cb85c;border-top-color:#74c870;border-left-color:#68c064;background:#fff"></div>
 <svg style="left:17px;top:112px;width:32px;height:33px"><use href="#mycomp"/></svg>
 <div class="a" style="left:19px;top:152px;font-size:16px;font-weight:bold">My Computer</div>
 <div class="a" style="left:6px;top:175px;width:200px;height:2px;background:#6090d0"></div>
 <div class="a" style="left:18px;top:192px">Select an item to view its description.</div>
 <div class="a" style="left:17px;top:216px;width:188px;height:15px;background:#f8f8e4"></div>
 <div class="a" style="left:19px;top:218px">Displays the contents of your computer</div>
 <div class="a" style="left:18px;top:244px">See also:</div>
 <div class="a lnk" style="left:18px;top:262px">My Documents</div>
 <div class="a lnk" style="left:18px;top:279px">My Network Places</div>
 <div class="a lnk" style="left:18px;top:295px">Dial-Up Networking</div>
 <!-- file icons -->
 <svg style="left:223px;top:109px;width:32px;height:32px" viewBox="0 0 32 32"><use href="#drv"/><rect x="8" y="15" width="13" height="3.500" rx="1" fill="#101010"/><circle cx="5" cy="16.500" r="1.200" fill="#d03030"/></svg>
 <div class="fl" style="left:194px;top:141px">Removable<br>Disk (A:)</div>
 <svg style="left:298px;top:109px;width:32px;height:32px" viewBox="0 0 32 32"><use href="#drv"/><path d="M5 17.500h21" stroke="#5c8c6c" stroke-width="1.500"/><circle cx="24" cy="17.500" r="1.200" fill="#30d040"/></svg>
 <div class="fl" style="left:269px;top:141px">WINME (C:)</div>
 <svg style="left:373px;top:109px;width:32px;height:32px" viewBox="0 0 32 32"><use href="#drv"/><path d="M5 17.500h21" stroke="#5c8c6c" stroke-width="1.500"/><circle cx="24" cy="17.500" r="1.200" fill="#30d040"/></svg>
 <div class="fl" style="left:344px;top:141px">APPS (D:)</div>
 <svg style="left:223px;top:178px;width:32px;height:34px" viewBox="0 0 32 34"><path d="M3 6q0-3 3-3h8q2 0 3 2l1 2h10q3 0 3 3v18q0 3-3 3H5q-3 0-3-3z" fill="#f4e88c" stroke="#5c5428" stroke-width="1.300"/><path d="M3 10h26" stroke="#fff8c0" stroke-width="1.500"/><path d="M8 13h14l3 3v3h-4v-2h-7v3H8z" fill="#a0a0a8" stroke="#303038" stroke-width=".9"/><path d="M12 19h4l1 10h-5z" fill="#585860" stroke="#202028" stroke-width=".7"/><path d="M21 14h3v8h-3z" fill="#d8d8e0" stroke="#404048" stroke-width=".6"/><path d="M20 22h5l1 8h-6z" fill="#d03828" stroke="#601810" stroke-width=".7"/><path d="M13 24h3.500v5h-3.500z" fill="#3858c8"/></svg>
 <div class="fl" style="left:194px;top:216px">Control Panel</div>
 <!-- status -->
 <div class="sunk" style="left:4px;top:423px;width:218px;height:17px"></div>
 <div class="a" style="left:8px;top:425px">4 object(s)</div>
 <div class="sunk" style="left:224px;top:423px;width:72px;height:17px"></div>
 <div class="sunk" style="left:298px;top:423px;width:152px;height:17px"></div>
 <svg style="left:301px;top:424px;width:16px;height:16px"><use href="#mycomp"/></svg>
 <div class="a" style="left:323px;top:425px">My Computer</div>
 <svg style="left:436px;top:427px;width:12px;height:12px" viewBox="0 0 12 12"><path d="M11 1L1 11M11 5L5 11M11 9L9 11" stroke="#808080" stroke-width="1"/><path d="M12 1L2 11M12 5L6 11M12 9L10 11" stroke="#fff" stroke-width="1"/></svg>
</div>
<div id="wa" class="a" style="left:723.500px;top:216.500px;width:275px;height:232px;background:#1e1e3a;font-family:'Liberation Mono','Liberation Sans',monospace">
<div class="a" style="left:0px;top:0px;width:275px;height:116px;background:#20203e;box-shadow:inset 0 0 0 1px #0c0c1c,inset 2px 2px 0 #3a3a62,inset -2px -2px 0 #14142a"></div>
<div class="a" style="left:2px;top:2px;width:271px;height:12px;background:#1e1e3c"></div>
<svg viewBox="0 0 12 8" style="left:5px;top:3px;width:12px;height:8px"><path d="M0 2l3-2 3 4 2-1 2 2 2-1-1 3-3-1-2 1-3-4z" fill="#e0c878"/></svg>
<div class="a" style="left:20px;top:4px;width:92px;height:6px;background:linear-gradient(#f4e6b0 0,#f4e6b0 45%,#8c7848 55%,#b49c60 100%)"></div>
<div class="a" style="left:118px;top:2.500px;font:bold 9px 'Liberation Sans',sans-serif;color:#f0f0f8;letter-spacing:.6px">WINAMP</div>
<div class="a" style="left:162px;top:4px;width:80px;height:6px;background:linear-gradient(#f4e6b0 0,#f4e6b0 45%,#8c7848 55%,#b49c60 100%)"></div>
<div class="a" style="left:245px;top:4px;width:8px;height:7px;background:#2c2c4c"><div class="a" style="left:1px;top:4px;width:6px;height:2px;background:#e8d898"></div></div>
<div class="a" style="left:255px;top:4px;width:8px;height:7px;background:#2c2c4c"><div class="a" style="left:1px;top:1px;width:6px;height:3px;background:#e8d898"></div></div>
<svg viewBox="0 0 8 7" style="left:265px;top:4px;width:8px;height:7px"><path d="M1 0l6 7M7 0L1 7" stroke="#e8c860" stroke-width="1.600"/></svg>
<div class="a" style="left:9px;top:21px;width:96px;height:42px;background:#000;box-shadow:0 0 0 1px #34345a, 0 0 0 2px #12122a"></div>
<div class="a" style="left:11px;top:23px;font-size:6px;line-height:8px;color:#34405c;font-weight:bold">O<br>A<br>I<br>D<br>V</div>
<svg viewBox="0 0 12 10" style="left:24px;top:27px;width:12px;height:10px"><rect x="0" y="1" width="2.500" height="2.500" fill="#20c830"/><rect x="0" y="6" width="2" height="2" fill="#a02818"/><path d="M4 0l7 5-7 5z" fill="#22d034"/></svg>
<div class="a" style="left:47px;top:23.600px;width:60px;font:17.800px 'Liberation Sans',sans-serif;color:#22c032;-webkit-text-stroke:.45px #22c032;letter-spacing:.3px;transform:scaleX(1.16);transform-origin:0 0;line-height:18px">02:07</div>
<svg viewBox="0 0 76 16" style="left:24px;top:43px;width:76px;height:16px"><defs><linearGradient id="vg" x1="0" y1="16" x2="0" y2="0" gradientUnits="userSpaceOnUse"><stop offset="0" stop-color="#18b020"/><stop offset=".3" stop-color="#40c020"/><stop offset=".55" stop-color="#c8c820"/><stop offset=".8" stop-color="#e88020"/><stop offset="1" stop-color="#e83020"/></linearGradient></defs><rect x="0" y="13" width="3" height="3" fill="url(#vg)"/><rect x="0" y="9" width="3" height="1" fill="#a8a8b8"/><rect x="4" y="14" width="3" height="2" fill="url(#vg)"/><rect x="4" y="10" width="3" height="1" fill="#a8a8b8"/><rect x="8" y="11" width="3" height="5" fill="url(#vg)"/><rect x="8" y="7" width="3" height="1" fill="#a8a8b8"/><rect x="12" y="12" width="3" height="4" fill="url(#vg)"/><rect x="12" y="8" width="3" height="1" fill="#a8a8b8"/><rect x="16" y="10" width="3" height="6" fill="url(#vg)"/><rect x="16" y="6" width="3" height="1" fill="#a8a8b8"/><rect x="20" y="11" width="3" height="5" fill="url(#vg)"/><rect x="20" y="7" width="3" height="1" fill="#a8a8b8"/><rect x="24" y="7" width="3" height="9" fill="url(#vg)"/><rect x="24" y="3" width="3" height="1" fill="#a8a8b8"/><rect x="28" y="5" width="3" height="11" fill="url(#vg)"/><rect x="28" y="1" width="3" height="1" fill="#a8a8b8"/><rect x="32" y="4" width="3" height="12" fill="url(#vg)"/><rect x="32" y="0" width="3" height="1" fill="#a8a8b8"/><rect x="36" y="6" width="3" height="10" fill="url(#vg)"/><rect x="36" y="2" width="3" height="1" fill="#a8a8b8"/><rect x="40" y="4" width="3" height="12" fill="url(#vg)"/><rect x="40" y="0" width="3" height="1" fill="#a8a8b8"/><rect x="44" y="5" width="3" height="11" fill="url(#vg)"/><rect x="44" y="1" width="3" height="1" fill="#a8a8b8"/><rect x="48" y="7" width="3" height="9" fill="url(#vg)"/><rect x="48" y="3" width="3" height="1" fill="#a8a8b8"/><rect x="52" y="10" width="3" height="6" fill="url(#vg)"/><rect x="52" y="6" width="3" height="1" fill="#a8a8b8"/><rect x="56" y="13" width="3" height="3" fill="url(#vg)"/><rect x="56" y="9" width="3" height="1" fill="#a8a8b8"/><rect x="60" y="14" width="3" height="2" fill="url(#vg)"/><rect x="60" y="10" width="3" height="1" fill="#a8a8b8"/><rect x="64" y="14" width="3" height="2" fill="url(#vg)"/><rect x="64" y="10" width="3" height="1" fill="#a8a8b8"/><rect x="68" y="15" width="3" height="1" fill="url(#vg)"/><rect x="68" y="11" width="3" height="1" fill="#a8a8b8"/><rect x="72" y="15" width="3" height="1" fill="url(#vg)"/><rect x="72" y="11" width="3" height="1" fill="#a8a8b8"/></svg>
<div class="a" style="left:110px;top:24px;width:156px;height:12px;background:#000;box-shadow:0 0 0 1px #303056"></div>
<div class="a" style="left:111px;top:25px;font:bold 8.300px 'Liberation Mono',monospace;color:#20c030;line-height:10px">** 9. CALEXICO - ALONE AGAIN O</div>
<div class="a" style="left:110px;top:41px;width:17px;height:10px;background:#000;box-shadow:0 0 0 1px #303056"></div>
<div class="a" style="left:111px;top:41px;font:bold 8.300px 'Liberation Mono',monospace;color:#20c030;line-height:10px">192</div>
<div class="a" style="left:130px;top:41px;font:bold 8px 'Liberation Sans',sans-serif;color:#d0d4e4;line-height:10px">kbps</div>
<div class="a" style="left:155px;top:41px;width:12px;height:10px;background:#000;box-shadow:0 0 0 1px #303056"></div>
<div class="a" style="left:156px;top:41px;font:bold 8.300px 'Liberation Mono',monospace;color:#20c030;line-height:10px">44</div>
<div class="a" style="left:170px;top:41px;font:bold 8px 'Liberation Sans',sans-serif;color:#d0d4e4;line-height:10px">khz</div>
<div class="a" style="left:212px;top:43px;font:bold 6.500px 'Liberation Sans',sans-serif;color:#6a7090;line-height:8px">MONO</div>
<div class="a" style="left:240px;top:42px;font:bold 7.500px 'Liberation Sans',sans-serif;color:#28d038;line-height:9px;text-shadow:0 0 2px #28d038">stereo</div>
<div class="a" style="left:107px;top:60px;width:66px;height:6px;background:#d8922c;box-shadow:0 0 0 1px #101024;border-radius:2px"></div>
<div class="a" style="left:148px;top:58px;width:14px;height:10px;background:#c8ccd8;box-shadow:inset 0 0 0 1px #50546c"><div class="a" style="left:5px;top:3px;width:1.500px;height:4px;background:#303850"></div><div class="a" style="left:8px;top:3px;width:1.500px;height:4px;background:#303850"></div></div>
<div class="a" style="left:178px;top:60px;width:36px;height:6px;background:#2ca838;box-shadow:0 0 0 1px #101024;border-radius:2px"></div>
<div class="a" style="left:189px;top:58px;width:14px;height:10px;background:#c8ccd8;box-shadow:inset 0 0 0 1px #50546c"><div class="a" style="left:5px;top:3px;width:1.500px;height:4px;background:#303850"></div><div class="a" style="left:8px;top:3px;width:1.500px;height:4px;background:#303850"></div></div>
<div class="a" style="left:219px;top:58px;width:23px;height:12px;background:#c8ccd8;box-shadow:inset 0 0 0 1px #585c74,inset 2px 2px 0 #eceef4"><div class="a" style="left:3px;top:2px;width:4px;height:3px;background:#284030"></div><div class="a" style="left:9px;top:1px;font:bold 7px 'Liberation Sans',sans-serif;color:#303850;line-height:10px">EQ</div></div>
<div class="a" style="left:242px;top:58px;width:23px;height:12px;background:#c8ccd8;box-shadow:inset 0 0 0 1px #585c74,inset 2px 2px 0 #eceef4"><div class="a" style="left:3px;top:2px;width:4px;height:3px;background:#284030"></div><div class="a" style="left:9px;top:1px;font:bold 7px 'Liberation Sans',sans-serif;color:#303850;line-height:10px">PL</div></div>
<div class="a" style="left:16px;top:73px;width:248px;height:9px;background:#14142a;box-shadow:inset 0 0 0 1px #0a0a18,0 1px 0 #34345a"></div>
<div class="a" style="left:150px;top:72px;width:29px;height:10px;background:linear-gradient(#f4e4a8,#c8a860);box-shadow:inset 0 0 0 1px #6c5830"><div class="a" style="left:4px;top:4px;width:21px;height:2px;background:#f8f0d0"></div></div>
<div class="a" style="left:14px;top:86px;width:119px;height:22px;background:#2a2a4a;box-shadow:inset 0 0 0 1px #16162c"></div>
<div class="a" style="left:16px;top:88px;width:22px;height:18px;background:#c4c8d6;box-shadow:inset 0 0 0 1px #585c74,inset 2px 2px 0 #e8eaf2,inset -2px -2px 0 #9a9eb4"><svg viewBox="0 0 23 18" style="left:0;top:0;width:22px;height:18px"><path d="M6 4v10M16 4v10l-8-5z" stroke="#485068" stroke-width="1.500" fill="#9098b0"/></svg></div>
<div class="a" style="left:39px;top:88px;width:22px;height:18px;background:#c4c8d6;box-shadow:inset 0 0 0 1px #585c74,inset 2px 2px 0 #e8eaf2,inset -2px -2px 0 #9a9eb4"><svg viewBox="0 0 23 18" style="left:0;top:0;width:22px;height:18px"><path d="M8 4l9 5-9 5z" stroke="#485068" stroke-width="1.500" fill="#9098b0"/></svg></div>
<div class="a" style="left:62px;top:88px;width:22px;height:18px;background:#c4c8d6;box-shadow:inset 0 0 0 1px #585c74,inset 2px 2px 0 #e8eaf2,inset -2px -2px 0 #9a9eb4"><svg viewBox="0 0 23 18" style="left:0;top:0;width:22px;height:18px"><path d="M7 4h3v10H7zM13 4h3v10h-3z" stroke="#485068" stroke-width="1.200" fill="#9098b0"/></svg></div>
<div class="a" style="left:85px;top:88px;width:22px;height:18px;background:#c4c8d6;box-shadow:inset 0 0 0 1px #585c74,inset 2px 2px 0 #e8eaf2,inset -2px -2px 0 #9a9eb4"><svg viewBox="0 0 23 18" style="left:0;top:0;width:22px;height:18px"><path d="M7 4h9v10H7z" stroke="#485068" stroke-width="1.500" fill="#9098b0"/></svg></div>
<div class="a" style="left:108px;top:88px;width:22px;height:18px;background:#c4c8d6;box-shadow:inset 0 0 0 1px #585c74,inset 2px 2px 0 #e8eaf2,inset -2px -2px 0 #9a9eb4"><svg viewBox="0 0 23 18" style="left:0;top:0;width:22px;height:18px"><path d="M17 4v10M7 4v10l8-5z" stroke="#485068" stroke-width="1.500" fill="#9098b0"/></svg></div>
<div class="a" style="left:136px;top:89px;width:22px;height:16px;background:#c4c8d6;box-shadow:inset 0 0 0 1px #585c74,inset 2px 2px 0 #e8eaf2,inset -2px -2px 0 #9a9eb4"><svg viewBox="0 0 22 16" style="left:0;top:0;width:22px;height:16px"><path d="M11 3l6 5H5zM5 10h12v3H5z" stroke="#485068" stroke-width="1.200" fill="#9098b0"/></svg></div>
<div class="a" style="left:164px;top:89px;width:46px;height:15px;background:#c8ccd8;box-shadow:inset 0 0 0 1px #585c74,inset 2px 2px 0 #eceef4"><div class="a" style="left:3px;top:2px;width:4px;height:3px;background:#284030"></div><div class="a" style="left:10px;top:1px;font:bold 7px 'Liberation Sans',sans-serif;color:#303850;line-height:13px">SHUFFLE</div></div>
<div class="a" style="left:211px;top:89px;width:28px;height:15px;background:#c8ccd8;box-shadow:inset 0 0 0 1px #585c74,inset 2px 2px 0 #eceef4"><div class="a" style="left:3px;top:2px;width:4px;height:3px;background:#284030"></div><div class="a" style="left:10px;top:1px;font:bold 7px 'Liberation Sans',sans-serif;color:#303850;line-height:13px"></div></div>
<svg viewBox="0 0 14 8" style="left:222px;top:93px;width:14px;height:8px"><path d="M2 6V2h9v4H5" fill="none" stroke="#303850" stroke-width="1.500"/><path d="M6 4v4L3 6z" fill="#303850"/></svg>
<svg viewBox="0 0 16 18" style="left:251px;top:88px;width:16px;height:18px"><path d="M11 0l4 4L5 17l-4-4z" fill="#d8b048" stroke="#6c5420" stroke-width="1"/><path d="M4 10l6-7M7 13l6-7" stroke="#f8e8a0" stroke-width="1.200"/></svg>
<div class="a" style="left:0px;top:116px;width:275px;height:116px;background:#20203e;box-shadow:inset 0 0 0 1px #0c0c1c,inset 2px 2px 0 #3a3a62,inset -2px -2px 0 #14142a"></div>
<div class="a" style="left:2px;top:118px;width:271px;height:12px;background:#1e1e3c"></div>
<div class="a" style="left:7px;top:121px;width:83px;height:5px;background:linear-gradient(#7c7858 0,#7c7858 50%,#54503c 100%)"></div>
<div class="a" style="left:95px;top:118.5px;font:bold 8.500px 'Liberation Sans',sans-serif;color:#c0c4d0;letter-spacing:.55px">WINAMP EQUALIZER</div>
<div class="a" style="left:194px;top:121px;width:58px;height:5px;background:linear-gradient(#7c7858 0,#7c7858 50%,#54503c 100%)"></div>
<div class="a" style="left:255px;top:120px;width:8px;height:7px;background:#2c2c4c"><div class="a" style="left:1px;top:1px;width:6px;height:2px;background:#807c5c"></div></div>
<svg viewBox="0 0 8 7" style="left:265px;top:120px;width:8px;height:7px"><path d="M1 0l6 7M7 0L1 7" stroke="#908050" stroke-width="1.400"/></svg>
<div class="a" style="left:14px;top:134px;width:25px;height:12px;background:#c8ccd8;box-shadow:inset 0 0 0 1px #585c74,inset 2px 2px 0 #eceef4"><div class="a" style="left:3px;top:2px;width:4px;height:3px;background:#284030"></div><div class="a" style="left:9px;top:1px;font:bold 6.5px 'Liberation Sans',sans-serif;color:#303850;line-height:10px">ON</div></div>
<div class="a" style="left:40px;top:134px;width:32px;height:12px;background:#c8ccd8;box-shadow:inset 0 0 0 1px #585c74,inset 2px 2px 0 #eceef4"><div class="a" style="left:3px;top:2px;width:4px;height:3px;background:#284030"></div><div class="a" style="left:9px;top:1px;font:bold 6.5px 'Liberation Sans',sans-serif;color:#303850;line-height:10px">AUTO</div></div>
<div class="a" style="left:217px;top:134px;width:44px;height:12px;background:#c8ccd8;box-shadow:inset 0 0 0 1px #585c74,inset 2px 2px 0 #eceef4"><div class="a" style="left:5px;top:1px;font:bold 7px 'Liberation Sans',sans-serif;color:#303850;line-height:10px">PRESETS</div></div>
<svg viewBox="0 0 113 19" style="left:86px;top:133px;width:113px;height:19px"><rect width="113" height="19" fill="#181832"/><path d="M6.0 0v19" stroke="#3c3c60" stroke-width="1"/><path d="M17.2 0v19" stroke="#3c3c60" stroke-width="1"/><path d="M28.4 0v19" stroke="#3c3c60" stroke-width="1"/><path d="M39.599999999999994 0v19" stroke="#3c3c60" stroke-width="1"/><path d="M50.8 0v19" stroke="#3c3c60" stroke-width="1"/><path d="M62.0 0v19" stroke="#3c3c60" stroke-width="1"/><path d="M73.19999999999999 0v19" stroke="#3c3c60" stroke-width="1"/><path d="M84.39999999999999 0v19" stroke="#3c3c60" stroke-width="1"/><path d="M95.6 0v19" stroke="#3c3c60" stroke-width="1"/><path d="M106.8 0v19" stroke="#3c3c60" stroke-width="1"/><path d="M0 9.500h113" stroke="#50507a" stroke-width="1"/><path d="M0 9h48c6 0 8 5 14 5s7-5 13-5h38" stroke="#d8d048" stroke-width="1.600" fill="none"/><path d="M55 12c4 2 10 2 14 0" stroke="#40c040" stroke-width="1.600" fill="none"/></svg>
<div class="a" style="left:25.5px;top:155px;width:5px;height:59.5px;background:linear-gradient(90deg,#a89430,#ecd858,#a89430);box-shadow:0 0 0 1px #101024"></div>
<div class="a" style="left:19px;top:155px;width:4px;height:1.5px;background:#70749c"></div>
<div class="a" style="left:33px;top:155px;width:4px;height:1.5px;background:#70749c"></div>
<div class="a" style="left:19px;top:184.5px;width:4px;height:1.5px;background:#70749c"></div>
<div class="a" style="left:33px;top:184.5px;width:4px;height:1.5px;background:#70749c"></div>
<div class="a" style="left:19px;top:214px;width:4px;height:1.5px;background:#70749c"></div>
<div class="a" style="left:33px;top:214px;width:4px;height:1.5px;background:#70749c"></div>
<div class="a" style="left:23px;top:181px;width:10px;height:10px;background:#c8ccd8;box-shadow:inset 0 0 0 1px #50546c,inset 2px 2px 0 #eceef4"><div class="a" style="left:3px;top:1.500px;font:bold 6px 'Liberation Sans',sans-serif;color:#404860;line-height:7px">▲</div></div>
<div class="a" style="left:82.5px;top:155px;width:5px;height:59.5px;background:linear-gradient(90deg,#a89430,#ecd858,#a89430);box-shadow:0 0 0 1px #101024"></div>
<div class="a" style="left:76px;top:155px;width:4px;height:1.5px;background:#70749c"></div>
<div class="a" style="left:90px;top:155px;width:4px;height:1.5px;background:#70749c"></div>
<div class="a" style="left:76px;top:184.5px;width:4px;height:1.5px;background:#70749c"></div>
<div class="a" style="left:90px;top:184.5px;width:4px;height:1.5px;background:#70749c"></div>
<div class="a" style="left:76px;top:214px;width:4px;height:1.5px;background:#70749c"></div>
<div class="a" style="left:90px;top:214px;width:4px;height:1.5px;background:#70749c"></div>
<div class="a" style="left:80px;top:181px;width:10px;height:10px;background:#c8ccd8;box-shadow:inset 0 0 0 1px #50546c,inset 2px 2px 0 #eceef4"><div class="a" style="left:3px;top:1.500px;font:bold 6px 'Liberation Sans',sans-serif;color:#404860;line-height:7px">▲</div></div>
<div class="a" style="left:100.5px;top:155px;width:5px;height:59.5px;background:linear-gradient(90deg,#a89430,#ecd858,#a89430);box-shadow:0 0 0 1px #101024"></div>
<div class="a" style="left:94px;top:155px;width:4px;height:1.5px;background:#70749c"></div>
<div class="a" style="left:108px;top:155px;width:4px;height:1.5px;background:#70749c"></div>
<div class="a" style="left:94px;top:184.5px;width:4px;height:1.5px;background:#70749c"></div>
<div class="a" style="left:108px;top:184.5px;width:4px;height:1.5px;background:#70749c"></div>
<div class="a" style="left:94px;top:214px;width:4px;height:1.5px;background:#70749c"></div>
<div class="a" style="left:108px;top:214px;width:4px;height:1.5px;background:#70749c"></div>
<div class="a" style="left:98px;top:181px;width:10px;height:10px;background:#c8ccd8;box-shadow:inset 0 0 0 1px #50546c,inset 2px 2px 0 #eceef4"><div class="a" style="left:3px;top:1.500px;font:bold 6px 'Liberation Sans',sans-serif;color:#404860;line-height:7px">▲</div></div>
<div class="a" style="left:118.5px;top:155px;width:5px;height:59.5px;background:linear-gradient(90deg,#a89430,#ecd858,#a89430);box-shadow:0 0 0 1px #101024"></div>
<div class="a" style="left:112px;top:155px;width:4px;height:1.5px;background:#70749c"></div>
<div class="a" style="left:126px;top:155px;width:4px;height:1.5px;background:#70749c"></div>
<div class="a" style="left:112px;top:184.5px;width:4px;height:1.5px;background:#70749c"></div>
<div class="a" style="left:126px;top:184.5px;width:4px;height:1.5px;background:#70749c"></div>
<div class="a" style="left:112px;top:214px;width:4px;height:1.5px;background:#70749c"></div>
<div class="a" style="left:126px;top:214px;width:4px;height:1.5px;background:#70749c"></div>
<div class="a" style="left:116px;top:181px;width:10px;height:10px;background:#c8ccd8;box-shadow:inset 0 0 0 1px #50546c,inset 2px 2px 0 #eceef4"><div class="a" style="left:3px;top:1.500px;font:bold 6px 'Liberation Sans',sans-serif;color:#404860;line-height:7px">▲</div></div>
<div class="a" style="left:136.5px;top:155px;width:5px;height:59.5px;background:linear-gradient(90deg,#a89430,#ecd858,#a89430);box-shadow:0 0 0 1px #101024"></div>
<div class="a" style="left:130px;top:155px;width:4px;height:1.5px;background:#70749c"></div>
<div class="a" style="left:144px;top:155px;width:4px;height:1.5px;background:#70749c"></div>
<div class="a" style="left:130px;top:184.5px;width:4px;height:1.5px;background:#70749c"></div>
<div class="a" style="left:144px;top:184.5px;width:4px;height:1.5px;background:#70749c"></div>
<div class="a" style="left:130px;top:214px;width:4px;height:1.5px;background:#70749c"></div>
<div class="a" style="left:144px;top:214px;width:4px;height:1.5px;background:#70749c"></div>
<div class="a" style="left:134px;top:181px;width:10px;height:10px;background:#c8ccd8;box-shadow:inset 0 0 0 1px #50546c,inset 2px 2px 0 #eceef4"><div class="a" style="left:3px;top:1.500px;font:bold 6px 'Liberation Sans',sans-serif;color:#404860;line-height:7px">▲</div></div>
<div class="a" style="left:154.5px;top:155px;width:5px;height:59.5px;background:linear-gradient(90deg,#a89430,#ecd858,#a89430);box-shadow:0 0 0 1px #101024"></div>
<div class="a" style="left:148px;top:155px;width:4px;height:1.5px;background:#70749c"></div>
<div class="a" style="left:162px;top:155px;width:4px;height:1.5px;background:#70749c"></div>
<div class="a" style="left:148px;top:184.5px;width:4px;height:1.5px;background:#70749c"></div>
<div class="a" style="left:162px;top:184.5px;width:4px;height:1.5px;background:#70749c"></div>
<div class="a" style="left:148px;top:214px;width:4px;height:1.5px;background:#70749c"></div>
<div class="a" style="left:162px;top:214px;width:4px;height:1.5px;background:#70749c"></div>
<div class="a" style="left:152px;top:181px;width:10px;height:10px;background:#c8ccd8;box-shadow:inset 0 0 0 1px #50546c,inset 2px 2px 0 #eceef4"><div class="a" style="left:3px;top:1.500px;font:bold 6px 'Liberation Sans',sans-serif;color:#404860;line-height:7px">▲</div></div>
<div class="a" style="left:172.5px;top:155px;width:5px;height:59.5px;background:linear-gradient(90deg,#4ca838,#70d850,#4ca838);box-shadow:0 0 0 1px #101024"></div>
<div class="a" style="left:166px;top:155px;width:4px;height:1.5px;background:#70749c"></div>
<div class="a" style="left:180px;top:155px;width:4px;height:1.5px;background:#70749c"></div>
<div class="a" style="left:166px;top:184.5px;width:4px;height:1.5px;background:#70749c"></div>
<div class="a" style="left:180px;top:184.5px;width:4px;height:1.5px;background:#70749c"></div>
<div class="a" style="left:166px;top:214px;width:4px;height:1.5px;background:#70749c"></div>
<div class="a" style="left:180px;top:214px;width:4px;height:1.5px;background:#70749c"></div>
<div class="a" style="left:170px;top:197px;width:10px;height:10px;background:#c8ccd8;box-shadow:inset 0 0 0 1px #50546c,inset 2px 2px 0 #eceef4"><div class="a" style="left:3px;top:1.500px;font:bold 6px 'Liberation Sans',sans-serif;color:#404860;line-height:7px">▲</div></div>
<div class="a" style="left:190.5px;top:155px;width:5px;height:59.5px;background:linear-gradient(90deg,#a89430,#ecd858,#a89430);box-shadow:0 0 0 1px #101024"></div>
<div class="a" style="left:184px;top:155px;width:4px;height:1.5px;background:#70749c"></div>
<div class="a" style="left:198px;top:155px;width:4px;height:1.5px;background:#70749c"></div>
<div class="a" style="left:184px;top:184.5px;width:4px;height:1.5px;background:#70749c"></div>
<div class="a" style="left:198px;top:184.5px;width:4px;height:1.5px;background:#70749c"></div>
<div class="a" style="left:184px;top:214px;width:4px;height:1.5px;background:#70749c"></div>
<div class="a" style="left:198px;top:214px;width:4px;height:1.5px;background:#70749c"></div>
<div class="a" style="left:188px;top:181px;width:10px;height:10px;background:#c8ccd8;box-shadow:inset 0 0 0 1px #50546c,inset 2px 2px 0 #eceef4"><div class="a" style="left:3px;top:1.500px;font:bold 6px 'Liberation Sans',sans-serif;color:#404860;line-height:7px">▲</div></div>
<div class="a" style="left:208.5px;top:155px;width:5px;height:59.5px;background:linear-gradient(90deg,#a89430,#ecd858,#a89430);box-shadow:0 0 0 1px #101024"></div>
<div class="a" style="left:202px;top:155px;width:4px;height:1.5px;background:#70749c"></div>
<div class="a" style="left:216px;top:155px;width:4px;height:1.5px;background:#70749c"></div>
<div class="a" style="left:202px;top:184.5px;width:4px;height:1.5px;background:#70749c"></div>
<div class="a" style="left:216px;top:184.5px;width:4px;height:1.5px;background:#70749c"></div>
<div class="a" style="left:202px;top:214px;width:4px;height:1.5px;background:#70749c"></div>
<div class="a" style="left:216px;top:214px;width:4px;height:1.5px;background:#70749c"></div>
<div class="a" style="left:206px;top:181px;width:10px;height:10px;background:#c8ccd8;box-shadow:inset 0 0 0 1px #50546c,inset 2px 2px 0 #eceef4"><div class="a" style="left:3px;top:1.500px;font:bold 6px 'Liberation Sans',sans-serif;color:#404860;line-height:7px">▲</div></div>
<div class="a" style="left:226.5px;top:155px;width:5px;height:59.5px;background:linear-gradient(90deg,#a89430,#ecd858,#a89430);box-shadow:0 0 0 1px #101024"></div>
<div class="a" style="left:220px;top:155px;width:4px;height:1.5px;background:#70749c"></div>
<div class="a" style="left:234px;top:155px;width:4px;height:1.5px;background:#70749c"></div>
<div class="a" style="left:220px;top:184.5px;width:4px;height:1.5px;background:#70749c"></div>
<div class="a" style="left:234px;top:184.5px;width:4px;height:1.5px;background:#70749c"></div>
<div class="a" style="left:220px;top:214px;width:4px;height:1.5px;background:#70749c"></div>
<div class="a" style="left:234px;top:214px;width:4px;height:1.5px;background:#70749c"></div>
<div class="a" style="left:224px;top:181px;width:10px;height:10px;background:#c8ccd8;box-shadow:inset 0 0 0 1px #50546c,inset 2px 2px 0 #eceef4"><div class="a" style="left:3px;top:1.500px;font:bold 6px 'Liberation Sans',sans-serif;color:#404860;line-height:7px">▲</div></div>
<div class="a" style="left:244.5px;top:155px;width:5px;height:59.5px;background:linear-gradient(90deg,#a89430,#ecd858,#a89430);box-shadow:0 0 0 1px #101024"></div>
<div class="a" style="left:238px;top:155px;width:4px;height:1.5px;background:#70749c"></div>
<div class="a" style="left:252px;top:155px;width:4px;height:1.5px;background:#70749c"></div>
<div class="a" style="left:238px;top:184.5px;width:4px;height:1.5px;background:#70749c"></div>
<div class="a" style="left:252px;top:184.5px;width:4px;height:1.5px;background:#70749c"></div>
<div class="a" style="left:238px;top:214px;width:4px;height:1.5px;background:#70749c"></div>
<div class="a" style="left:252px;top:214px;width:4px;height:1.5px;background:#70749c"></div>
<div class="a" style="left:242px;top:181px;width:10px;height:10px;background:#c8ccd8;box-shadow:inset 0 0 0 1px #50546c,inset 2px 2px 0 #eceef4"><div class="a" style="left:3px;top:1.500px;font:bold 6px 'Liberation Sans',sans-serif;color:#404860;line-height:7px">▲</div></div>
<div class="a" style="left:44px;top:151.5px;font:bold 6.500px 'Liberation Sans',sans-serif;color:#c8a838;line-height:8px">+12 db</div>
<div class="a" style="left:44px;top:180.5px;font:bold 6.500px 'Liberation Sans',sans-serif;color:#c8a838;line-height:8px">+0 db</div>
<div class="a" style="left:44px;top:210px;font:bold 6.500px 'Liberation Sans',sans-serif;color:#c8a838;line-height:8px">-12 db</div>
<div class="a" style="left:15px;top:217.5px;font:bold 6.500px 'Liberation Sans',sans-serif;color:#c8ccdc;line-height:8px">PREAMP</div>
<div class="a" style="left:75px;top:217.5px;width:20px;text-align:center;font:bold 6.500px 'Liberation Sans',sans-serif;color:#c8ccdc;line-height:8px">60</div>
<div class="a" style="left:93px;top:217.5px;width:20px;text-align:center;font:bold 6.500px 'Liberation Sans',sans-serif;color:#c8ccdc;line-height:8px">170</div>
<div class="a" style="left:111px;top:217.5px;width:20px;text-align:center;font:bold 6.500px 'Liberation Sans',sans-serif;color:#c8ccdc;line-height:8px">310</div>
<div class="a" style="left:129px;top:217.5px;width:20px;text-align:center;font:bold 6.500px 'Liberation Sans',sans-serif;color:#c8ccdc;line-height:8px">600</div>
<div class="a" style="left:147px;top:217.5px;width:20px;text-align:center;font:bold 6.500px 'Liberation Sans',sans-serif;color:#c8ccdc;line-height:8px">1K</div>
<div class="a" style="left:165px;top:217.5px;width:20px;text-align:center;font:bold 6.500px 'Liberation Sans',sans-serif;color:#c8ccdc;line-height:8px">3K</div>
<div class="a" style="left:183px;top:217.5px;width:20px;text-align:center;font:bold 6.500px 'Liberation Sans',sans-serif;color:#c8ccdc;line-height:8px">6K</div>
<div class="a" style="left:201px;top:217.5px;width:20px;text-align:center;font:bold 6.500px 'Liberation Sans',sans-serif;color:#c8ccdc;line-height:8px">12K</div>
<div class="a" style="left:219px;top:217.5px;width:20px;text-align:center;font:bold 6.500px 'Liberation Sans',sans-serif;color:#c8ccdc;line-height:8px">14K</div>
<div class="a" style="left:237px;top:217.5px;width:20px;text-align:center;font:bold 6.500px 'Liberation Sans',sans-serif;color:#c8ccdc;line-height:8px">16K</div>
</div>
<svg viewBox="0 0 12 20" style="left:771px;top:321px;width:12px;height:20px"><path d="M1 1v15l3.500-3.500L7 18.500l2.500-1L7 12h5z" fill="#fff" stroke="#000" stroke-width="1"/></svg>
<div class="a" style="left:-6px;top:742px;width:1036px;height:34px;background:#d4d0c8"></div><div id="tb">
<div class="btn" style="left:2px;top:4px;width:54px;height:22px"><svg viewBox="0 0 32 32" style="left:4px;top:3px;width:16px;height:16px"><path d="M8 5q6-3 11 0v10q-5-3-11 0z" fill="#e03020"/><path d="M20 5q5 3 10 0v10q-5 3-10 0z" fill="#30a030"/><path d="M8 17q6-3 11 0v10q-5-3-11 0z" fill="#2060d0"/><path d="M20 17q5 3 10 0v10q-5 3-10 0z" fill="#e8c020"/><path d="M8 4q6-3 11 0 6 3 11 0v24q-5 3-11 0-5-3-11 0z" fill="none" stroke="#000" stroke-width="2"/><path d="M19.500 4v24M8 16q6-3 11 0 6 3 11 0" stroke="#000" stroke-width="2" fill="none"/><path d="M1 7h4v3H1zM1 13h4v3H1zM1 19h4v3H1zM1 25h4v3H1z" fill="#000"/></svg><div class="a" style="left:22px;top:4px;font-weight:bold;font-size:11.500px;letter-spacing:.2px">Start</div></div>
<div class="vsep" style="left:60px;top:4px;height:22px"></div><div class="grip" style="left:65px;top:5px;height:20px"></div>
<svg viewBox="0 0 32 32" style="left:72px;top:7px;width:16px;height:16px"><rect x="3" y="5" width="24" height="24" fill="#fff" stroke="#2060c0" stroke-width="4"/><path d="M3 5h24v5H3z" fill="#2060c0"/><path d="M28 1l3 3-13 15-5 2 2-5z" fill="#f0c030" stroke="#604808" stroke-width="1"/><path d="M9 16h8M9 21h6" stroke="#404040" stroke-width="2"/></svg>
<svg viewBox="0 0 32 32" style="left:96px;top:7px;width:16px;height:16px"><path d="M16 3.500a13 13 0 0 1 13 14.500H11.500a5 5 0 0 0 9.500 1.500H28.500A13 13 0 1 1 16 3.500zm0 6a5 5 0 0 0-4.600 3.500h9.200A5 5 0 0 0 16 9.500z" fill="#1c70e0"/><path d="M5.500 12a11.500 11.500 0 0 1 10.500-7 12 12 0 0 1 7 2.500" stroke="#78c8ff" stroke-width="2.200" fill="none"/><path d="M30 3c-5-3.500-17 3-23 13.500-3 5.500-4 10.500-1 12" stroke="#3c98f4" stroke-width="2.400" fill="none"/><path d="M6 22a11 11 0 0 0 9 6" stroke="#0c48a8" stroke-width="1.500" fill="none"/></svg>
<svg viewBox="0 0 32 32" style="left:120px;top:7px;width:16px;height:16px"><path d="M7 9h22v15H7z" fill="#fff" stroke="#505050" stroke-width="1"/><path d="M7 9l11 8 11-8" stroke="#808080" stroke-width="1" fill="none"/><rect x="23" y="11" width="4" height="4" fill="#d04040"/><path d="M10 17h12v5H10z" fill="#b0b0b0"/><path d="M4 12C6 4 14 1 21 5l-2-4 7 4-7 4 1-2c-5-2-10 0-12 5z" fill="#2878e0"/><path d="M28 20c-2 8-10 11-17 7l2 4-7-4 7-4-1 2c5 2 10 0 12-5z" fill="#2878e0"/></svg>
<svg viewBox="0 0 32 32" style="left:143px;top:7px;width:16px;height:16px"><rect x="2" y="6" width="5" height="18" fill="#e04030"/><rect x="2" y="6" width="5" height="6" fill="#40a040"/><rect x="2" y="18" width="5" height="6" fill="#3060d0"/><rect x="6" y="2" width="24" height="26" fill="#f0c040" stroke="#c09020" stroke-width="1"/><path d="M11 5l17 10-17 10z" fill="#303098" stroke="#181860" stroke-width="1"/><path d="M13 9l10 6-10 1z" fill="#6868c8"/></svg>
<svg viewBox="0 0 32 32" style="left:166px;top:7px;width:16px;height:16px"><path d="M2 26l7-11-2-4 13-8 10-2-2 10-7 12-4-2-10 10z" fill="#e8a028" stroke="#382408" stroke-width="2.200"/><path d="M9 15l8 8M13 9l10 10" stroke="#7c4c10" stroke-width="1.500"/><path d="M12 14l12-10" stroke="#f8d888" stroke-width="2"/></svg>
<svg viewBox="0 0 32 32" style="left:188px;top:7px;width:16px;height:16px"><rect x="4" y="2" width="24" height="28" rx="2" fill="#a8b8d8" stroke="#485878" stroke-width="2"/><circle cx="16" cy="14" r="7" fill="#e0e8f8" stroke="#485878" stroke-width="1.500"/><circle cx="16" cy="14" r="2.500" fill="#3858a8"/><rect x="9" y="24" width="14" height="3" fill="#485878"/></svg>
<div class="vsep" style="left:213px;top:4px;height:22px"></div><div class="grip" style="left:218px;top:5px;height:20px"></div>
<div class="a" style="left:223px;top:4px;width:159px;height:22px;background:#eae8e4;box-shadow:inset 1px 1px 0 #404040,inset -1px -1px 0 #fff,inset 2px 2px 0 #808080,inset -2px -2px 0 #d4d0c8"><svg viewBox="0 0 32 32" style="left:5px;top:4px;width:16px;height:16px"><path d="M2 26l7-11-2-4 13-8 10-2-2 10-7 12-4-2-10 10z" fill="#e8a028" stroke="#382408" stroke-width="2.200"/><path d="M9 15l8 8M13 9l10 10" stroke="#7c4c10" stroke-width="1.500"/><path d="M12 14l12-10" stroke="#f8d888" stroke-width="2"/></svg><div class="a" style="left:23px;top:5px;font-weight:bold;font-size:11px">9. Calexico - Alone A...</div></div>
<div class="btn" style="left:385px;top:4px;width:160px;height:22px"><svg style="left:4px;top:3px;width:16px;height:16px"><use href="#mycomp"/></svg><div class="a" style="left:23px;top:4px">My Computer</div></div>
<div class="sunk" style="left:917px;top:4px;width:105px;height:22px"></div>
<svg viewBox="0 0 32 32" style="left:921px;top:7px;width:16px;height:16px"><path d="M2 26l7-11-2-4 13-8 10-2-2 10-7 12-4-2-10 10z" fill="#e8a028" stroke="#382408" stroke-width="2.200"/><path d="M9 15l8 8M13 9l10 10" stroke="#7c4c10" stroke-width="1.500"/><path d="M12 14l12-10" stroke="#f8d888" stroke-width="2"/></svg><svg viewBox="0 0 32 32" style="left:940px;top:7px;width:16px;height:16px"><path d="M4 11h7l9-8v26l-9-8H4z" fill="#e8e040" stroke="#404010" stroke-width="1.500"/><path d="M24 9q4 7 0 14M28 6q6 10 0 20" stroke="#808080" stroke-width="2" fill="none"/></svg>
<div class="a" style="left:971px;top:8px">2:45 PM</div>
</div>
</div>
</body></html>
